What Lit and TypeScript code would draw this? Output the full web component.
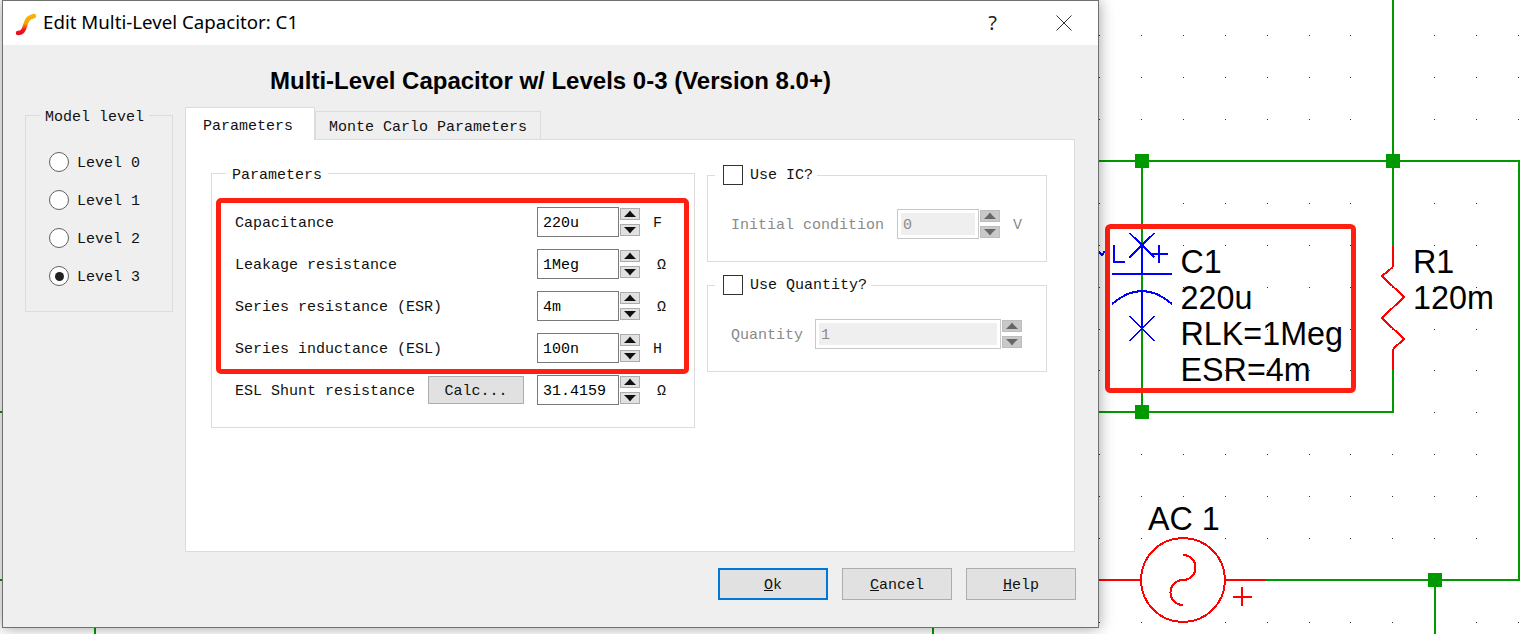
import { LitElement, html, css, svg } from "lit";
import { customElement } from "lit/decorators.js";

@customElement("app-root")
export class AppRoot extends LitElement {
  static styles = css`
    :host { display: block; position: relative; width: 1538px; height: 634px; overflow: hidden; background: #fff; font-family: "Liberation Mono", monospace; font-size: 15px; color: #111; }
    .canvas { position: absolute; left: 0; top: 0; display: block; }
    .sch { font-family: "Liberation Sans", Arial, sans-serif; font-size: 32.3px; fill: #000; }
    .dialog { position: absolute; left: 2px; top: 0; width: 1097px; height: 628px; box-sizing: border-box; border: 1px solid #707070; background: #efefef; box-shadow: 0 0 14px rgba(0,0,0,.38); display: flex; flex-direction: column; }
    .titlebar { height: 44px; flex: none; background: #fff; display: flex; align-items: center; padding-left: 12px; }
    .logo { width: 22px; height: 24px; flex: none; margin-top: 1px; }
    .title { margin: 0 0 3px 6px; font-family: "Noto Sans", "Open Sans", sans-serif; font-size: 18.7px; color: #000; }
    .help { margin: 0 59px 2px auto; font-family: "Noto Sans", sans-serif; font-size: 20px; color: #222; }
    .close { width: 16px; height: 16px; margin-right: 26px; flex: none; }
    .heading { height: 52px; padding-top: 10px; flex: none; line-height: 52px; text-align: center; font-family: "Liberation Sans", Arial, sans-serif; font-weight: 700; font-size: 24px; color: #000; }
    .main { display: flex; gap: 12px; padding: 0 22px; height: 445px; flex: none; }
    .group { position: relative; box-sizing: border-box; border: 1px solid #dcdcdc; }
    .legend { position: absolute; left: 14px; top: -7px; height: 18px; line-height: 18px; padding: 0 5px; background: linear-gradient(#efefef, #efefef) 0 0 / 100% 7px no-repeat; white-space: nowrap; }
    .pane .legend { background: linear-gradient(#fff, #fff) 0 0 / 100% 7px no-repeat; }
    .model { width: 148px; height: 197px; margin-top: 8px; flex: none; padding: 36px 0 0 23px; display: flex; flex-direction: column; gap: 18px; }
    .radio-row { display: flex; align-items: center; gap: 8px; height: 20px; }
    .radio-row span { padding-top: 2px; }
    .radio { width: 20px; height: 20px; box-sizing: border-box; border: 1.5px solid #606060; border-radius: 50%; background: #fff; flex: none; display: flex; align-items: center; justify-content: center; }
    .radio i { width: 9px; height: 9px; border-radius: 50%; background: #222; }
    .tabs-col { width: 890px; flex: none; display: flex; flex-direction: column; }
    .tabs { display: flex; align-items: flex-end; height: 33px; flex: none; margin-bottom: -1px; position: relative; }
    .tab { box-sizing: border-box; border: 1px solid #dcdcdc; white-space: nowrap; }
    .tab.on { width: 130px; height: 33px; background: #fff; border-bottom: none; padding: 10px 0 0 17px; line-height: 18px; position: relative; z-index: 1; }
    .tab.off { width: 226px; height: 29px; padding: 7px 0 0 13px; line-height: 18px; background: #efefef; }
    .pane { box-sizing: border-box; height: 413px; background: #fff; border: 1px solid #dcdcdc; padding: 33px 0 0 25px; display: flex; gap: 12px; align-items: flex-start; }
    .params { width: 484px; height: 255px; flex: none; padding: 33px 0 0 23px; display: flex; flex-direction: column; gap: 12px; }
    .params .legend { left: 14px; padding: 0 6px; }
    .row { display: grid; grid-template-columns: 302px 82px 21px 1fr; height: 30px; align-items: center; }
    .lbl { display: flex; align-items: center; padding: 2px 13px 0 0; white-space: nowrap; }
    .calc { margin: -2px 0 0 auto; width: 96px; height: 28px; box-sizing: border-box; border: 1px solid #adadad; background: #e1e1e1; display: flex; align-items: center; justify-content: center; color: #111; padding-top: 2px; }
    .input { box-sizing: border-box; height: 30px; border: 1px solid #7a7a7a; background: #fff; display: flex; align-items: center; padding: 2px 0 0 5px; color: #000; }
    .input.dis { border-color: #c8c8c8; padding: 3px; color: #8a8a8a; }
    .input.dis span { display: flex; align-items: center; box-sizing: border-box; width: 100%; height: 100%; background: #efefef; padding: 2px 0 0 2px; }
    .spin { margin-left: 1px; width: 20px; height: 30px; display: flex; flex-direction: column; gap: 4px; padding-top: 1px; box-sizing: border-box; }
    .spin div { box-sizing: border-box; width: 20px; height: 12px; border: 1px solid #adadad; background: #e1e1e1; display: block; }
    .spin svg { display: block; fill: #111; }
    .spin.dis div { background: #c9c9c9; border-color: #bdbdbd; }
    .spin.dis svg { fill: #666; }
    .unit { padding: 2px 0 0 13px; }
    .unit.ohm { padding-left: 17px; }
    .unit.grey { color: #8a8a8a; }
    .side { width: 340px; margin-top: 2px; flex: none; display: flex; flex-direction: column; gap: 23px; }
    .opt { height: 87px; padding: 33px 0 0 23px; display: flex; }
    .opt .legend { left: 7px; top: -11px; height: 20px; display: flex; align-items: center; gap: 7px; padding: 0 4px 0 8px; background: linear-gradient(#fff, #fff) 0 0 / 100% 100% no-repeat; }
    .opt .legend span { padding-top: 2px; }
    .check { width: 20px; height: 20px; box-sizing: border-box; border: 1px solid #333; background: #fff; flex: none; }
    .opt-row { display: flex; height: 30px; align-items: center; color: #8a8a8a; }
    .opt-lbl { flex: none; padding-top: 2px; }
    .w166 { width: 166px; }
    .w84 { width: 84px; }
    .in82 { width: 82px; }
    .in186 { width: 186px; }
    .marker { position: absolute; left: 4px; top: 24px; width: 473px; height: 176px; box-sizing: border-box; border: 5px solid #ff2011; border-radius: 5px; }
    .footer { display: flex; justify-content: flex-end; gap: 14px; padding: 16px 22px 0 0; }
    .btn { box-sizing: border-box; width: 110px; height: 32px; border: 1px solid #adadad; background: #e1e1e1; display: flex; align-items: center; justify-content: center; color: #111; }
    .btn span { padding-top: 2px; }
    .btn.def { border: 2px solid #0078d7; }
  `;

  private arrow(up: boolean) {
    return html`<svg width="18" height="10" viewBox="0 0 18 10">
      <path d=${up ? "M9 1.5 L11 4 L15 8 H3 L7 4 Z" : "M3 2 H15 L11 6 L9 8.5 L7 6 Z"}></path>
    </svg>`;
  }

  private spin(dis = false) {
    return html`<div class="spin ${dis ? "dis" : ""}"><div>${this.arrow(true)}</div><div>${this.arrow(false)}</div></div>`;
  }

  private row(label: unknown, value: string, unit: string) {
    return html`<div class="row">
      <div class="lbl">${label}</div>
      <div class="input">${value}</div>
      ${this.spin()}
      <div class="unit ${unit === "Ω" ? "ohm" : ""}">${unit}</div>
    </div>`;
  }

  private canvas() {
    const dots = [];
    for (let i = 0; i <= 10; i++) {
      for (let j = 0; j <= 14; j++) {
        dots.push(svg`<rect x=${Math.round(1099 + 41.9 * i)} y=${Math.round(35 + 41.93 * j)} width="1" height="1" fill="#333"></rect>`);
      }
    }
    const G = "#009900", R = "#ff0000", B = "#0000ff";
    const junction = (x: number, y: number) => svg`<rect x=${x - 7} y=${y - 7} width="14" height="14" fill=${G}></rect>`;
    return html`<svg class="canvas" width="1538" height="634" viewBox="0 0 1538 634" shape-rendering="crispEdges">
      ${dots}
      <g fill="none" stroke=${G} stroke-width="2">
        <path d="M1090 161 H1519 V580 H1266"></path>
        <path d="M1142 161 V412"></path>
        <path d="M1393 0 V246"></path>
        <path d="M1393 370 V412 H0"></path>
        <path d="M1435 580 V634"></path>
        <path d="M0 580 H1099"></path>
        <path d="M95 620 V634"></path>
        <path d="M933 620 V634"></path>
      </g>
      ${junction(1142, 161)}${junction(1393, 161)}${junction(1142, 412)}${junction(1435, 580)}
      <g fill="none" stroke=${R} stroke-width="2">
        <path d="M1393 246 V267"></path>
        <path d="M1393 349 V370"></path>
        <path d="M1099 580 H1142"></path>
        <path d="M1226 580 H1266"></path>
        <path d="M1233 597 H1252 M1242 587 V606"></path>
        <path d="M1393 267 L1382 276 L1404 297 L1382 318 L1404 339 L1393 349"></path>
        <circle cx="1183" cy="580" r="42"></circle>
        <path d="M1183 555 A12.5 12.5 0 0 1 1183 580 A12.5 12.5 0 0 0 1183 605"></path>
      </g>
      <g fill="none" stroke=${B} stroke-width="2">
        <path d="M1142 245 V273 M1112 274 H1172 M1142 291 V328"></path>
        <path d="M1114 245 V262 H1125"></path>
        <path d="M1152 254 H1168 M1159 245 V263"></path>
        <path d="M1129.5 233 L1154.5 257.5 M1154.5 233 L1129.5 257.5"></path>
        <path d="M1129.5 316 L1154.5 341 M1154.5 316 L1129.5 341"></path>
        <path d="M1112 304 Q1142 278 1172 304"></path>
        <path d="M1099 252 L1102 255 L1105 251"></path>
      </g>
      <g shape-rendering="geometricPrecision">
        <text class="sch" x="1180.5" y="273">C1</text>
        <text class="sch" x="1180.5" y="309">220u</text>
        <text class="sch" x="1180.5" y="345">RLK=1Meg</text>
        <text class="sch" x="1180.5" y="381">ESR=4m</text>
        <text class="sch" x="1413" y="273">R1</text>
        <text class="sch" x="1413" y="309">120m</text>
        <text class="sch" x="1148" y="530">AC 1</text>
      </g>
      <rect x="1107.5" y="226.5" width="246" height="164" rx="3" fill="none" stroke="#ff2011" stroke-width="5" shape-rendering="geometricPrecision"></rect>
    </svg>`;
  }

  render() {
    const levels = ["Level 0", "Level 1", "Level 2", "Level 3"];
    return html`
      ${this.canvas()}
      <div class="dialog">
        <div class="titlebar">
          <svg class="logo" viewBox="0 0 22 24">
            <defs><linearGradient id="lg" x1="0" y1="0" x2="0" y2="1">
              <stop offset="0" stop-color="#f9b300"></stop><stop offset=".45" stop-color="#f9a000"></stop><stop offset=".8" stop-color="#f0181c"></stop><stop offset="1" stop-color="#e8101c"></stop>
            </linearGradient></defs>
            <path d="M3 21 C9 21 9 16 11 11 C12 7 14 5 19 4" fill="none" stroke="url(#lg)" stroke-width="4.4" stroke-linecap="round"></path>
          </svg>
          <div class="title">Edit Multi-Level Capacitor: C1</div>
          <div class="help">?</div>
          <svg class="close" viewBox="0 0 16 16"><path d="M.5 .5 L15.5 15.5 M15.5 .5 L.5 15.5" stroke="#333" stroke-width="1" fill="none"></path></svg>
        </div>
        <div class="heading">Multi-Level Capacitor w/ Levels 0-3 (Version 8.0+)</div>
        <div class="main">
          <div class="group model">
            <div class="legend">Model level</div>
            ${levels.map((l, i) => html`<div class="radio-row"><div class="radio">${i === 3 ? html`<i></i>` : ""}</div><span>${l}</span></div>`)}
          </div>
          <div class="tabs-col">
            <div class="tabs">
              <div class="tab on">Parameters</div>
              <div class="tab off">Monte Carlo Parameters</div>
            </div>
            <div class="pane">
              <div class="group params">
                <div class="legend">Parameters</div>
                ${this.row("Capacitance", "220u", "F")}
                ${this.row("Leakage resistance", "1Meg", "Ω")}
                ${this.row("Series resistance (ESR)", "4m", "Ω")}
                ${this.row("Series inductance (ESL)", "100n", "H")}
                ${this.row(html`ESL Shunt resistance<div class="calc">Calc...</div>`, "31.4159", "Ω")}
                <div class="marker"></div>
              </div>
              <div class="side">
                <div class="group opt">
                  <div class="legend"><div class="check"></div><span>Use IC?</span></div>
                  <div class="opt-row">
                    <div class="opt-lbl w166">Initial condition</div>
                    <div class="input dis in82"><span>0</span></div>
                    ${this.spin(true)}
                    <div class="unit grey">V</div>
                  </div>
                </div>
                <div class="group opt">
                  <div class="legend"><div class="check"></div><span>Use Quantity?</span></div>
                  <div class="opt-row">
                    <div class="opt-lbl w84">Quantity</div>
                    <div class="input dis in186"><span>1</span></div>
                    ${this.spin(true)}
                  </div>
                </div>
              </div>
            </div>
          </div>
        </div>
        <div class="footer">
          <div class="btn def"><span><u>O</u>k</span></div>
          <div class="btn"><span><u>C</u>ancel</span></div>
          <div class="btn"><span><u>H</u>elp</span></div>
        </div>
      </div>
    `;
  }
}
